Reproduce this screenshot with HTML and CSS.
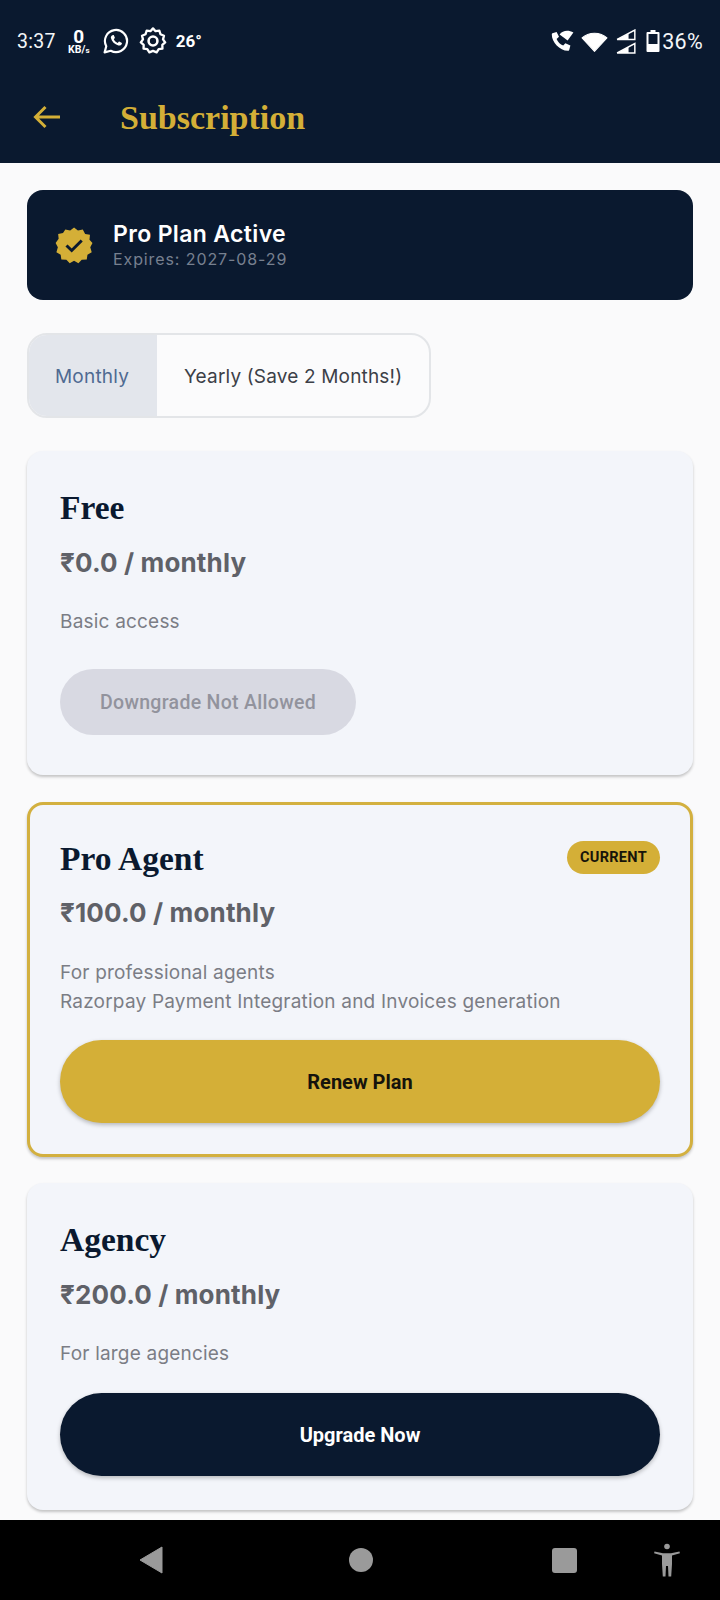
FILE: index.html
```html
<!DOCTYPE html>
<html lang="en">
<head>
<meta charset="utf-8">
<title>Subscription</title>
<link rel="stylesheet" href="styles.css">
</head>
<body>
<div class="screen">
  <header class="top">
    <div class="status">
      <div class="status-left">
        <span class="time">3:37</span>
        <span class="speed"><b>0</b><small>KB/<i>s</i></small></span>
        <svg class="si wa" viewBox="0 0 24 24"><path d="M1.500 22.500l1.500-5.700A10.200 10.200 0 1 1 7.200 21z" fill="none" stroke="#fff" stroke-width="2" stroke-linejoin="round"/><path d="M8.800 6.800c.5-.4 1.100-.4 1.300.1l.8 1.800c.1.300 0 .6-.2.800l-.7.8c.7 1.500 2 2.800 3.600 3.500l.9-1c.2-.2.5-.3.8-.2l1.800.9c.4.2.5.7.2 1.200-.5 1.100-1.800 1.700-3.100 1.400-3.500-.9-6.100-3.500-6.900-6.800-.2-1.100.2-1.800 1.500-2.500z" fill="#fff"/></svg>
        <svg class="si gear" viewBox="0 0 24 24"><path d="M12 1.800l2.200 2.400 3.200-.5 1 3.100 3 1.300-.8 3.100 1.800 2.600-2.400 2.100.1 3.300-3.200.4-1.800 2.700-3.100-1.200-3.100 1.200-1.800-2.700-3.200-.4.1-3.300-2.400-2.100 1.800-2.600-.8-3.100 3-1.300 1-3.100 3.200.5z" fill="none" stroke="#fff" stroke-width="2" stroke-linejoin="round" transform="translate(0 -.6)"/><circle cx="12" cy="12" r="3.800" fill="none" stroke="#fff" stroke-width="2.200"/></svg>
        <span class="temp">26°</span>
      </div>
      <div class="status-right">
        <svg class="call" viewBox="0 0 20 20"><path d="M2 3.500l3.500-1 2 4-2 1.800c.9 2.400 3 4.500 5.500 5.500l1.800-2 4.200 2-1 3.700c-.2.500-.6.700-1.100.7C8 17.800 1.500 11 1.500 4.500c0-.4.100-.8.500-1z" fill="#fff"/><path d="M8 4.500C10.500 1 15.500 .5 19.500 3l-4.800 6.500z" fill="#fff"/></svg>
        <svg class="wifi" viewBox="0 0 26 20"><path d="M1 6.500C7.500 .5 18.500 .5 25 6.500L13 19.500z" fill="#fff" stroke="#fff" stroke-linejoin="round"/></svg>
        <svg class="signal" viewBox="0 0 20 24"><path d="M1 10L18 1v9z" fill="none" stroke="#fff" stroke-width="1.400"/><path d="M1 10l11-5.800V10z" fill="#fff"/><path d="M1 23l17-9v9z" fill="none" stroke="#fff" stroke-width="1.400"/><path d="M1 23l11-5.800V23z" fill="#fff"/></svg>
        <svg class="batt" viewBox="0 0 14 22"><path d="M4.500 0h5v2h3a1 1 0 0 1 1 1v18a1 1 0 0 1-1 1h-11a1 1 0 0 1-1-1V3a1 1 0 0 1 1-1h3z" fill="#fff"/><rect x="2.500" y="4" width="9" height="10" fill="#0a192f"/></svg>
        <span class="pct">36%</span>
      </div>
    </div>
    <div class="appbar">
      <svg class="back" viewBox="0 0 28 24"><path d="M27 12H2.500M12.500 2L2.500 12l10 10" fill="none" stroke="#d4af37" stroke-width="3"/></svg>
      <h1 class="title">Subscription</h1>
    </div>
  </header>

  <main class="content">
    <section class="banner">
      <svg class="badge-icon" viewBox="0 0 36 36"><path d="M18 0l4 3.300 5-1.200 2.400 4.600 5 1-.5 5.100L37 16l-2.300 4.500 1.500 5-4.400 2.600-.7 5.100-5.200.1L22.500 37 18 34.500 13.500 37l-3.400-3.700-5.200-.1-.7-5.100-4.400-2.600 1.500-5L-1 16l3.100-4.200-.5-5.100 5-1L9 2.100l5 1.200z" fill="#d4af37" transform="translate(.6 .4) scale(.97)"/><path d="M10.500 18.500l5.200 5 10-10" fill="none" stroke="#0a192f" stroke-width="3"/></svg>
      <div class="banner-text">
        <div class="banner-title">Pro Plan Active</div>
        <div class="banner-sub">Expires: 2027-08-29</div>
      </div>
    </section>

    <div class="toggle">
      <div class="seg seg-on">Monthly</div>
      <div class="seg">Yearly (Save 2 Months!)</div>
    </div>

    <section class="card card-free">
      <h2 class="plan">Free</h2>
      <div class="price">₹0.0 / monthly</div>
      <p class="desc">Basic access</p>
      <div class="btn btn-off">Downgrade Not Allowed</div>
    </section>

    <section class="card card-current">
      <span class="tag">CURRENT</span>
      <h2 class="plan">Pro Agent</h2>
      <div class="price">₹100.0 / monthly</div>
      <p class="desc">For professional agents<br>Razorpay Payment Integration and Invoices generation</p>
      <div class="btn btn-gold">Renew Plan</div>
    </section>

    <section class="card card-agency">
      <h2 class="plan">Agency</h2>
      <div class="price">₹200.0 / monthly</div>
      <p class="desc">For large agencies</p>
      <div class="btn btn-navy">Upgrade Now</div>
    </section>
  </main>

  <nav class="navbar">
    <svg class="nav-back" viewBox="0 0 24 28"><path d="M23 1v26L1 14z" fill="#9a9a9a" stroke="#9a9a9a" stroke-width="1" stroke-linejoin="round"/></svg>
    <span class="nav-home"></span>
    <span class="nav-recent"></span>
    <svg class="nav-a11y" viewBox="0 0 26 34"><circle cx="13" cy="3.500" r="2.800" fill="#9a9a9a"/><path d="M.500 8.500L9 10.200h8l8.500-1.700.4 1.800L18 12.500V21l-.8 12.500h-2.700L14 23h-2l-.5 10.500H8.800L8 21v-8.500L.1 10.300z" fill="#9a9a9a"/></svg>
  </nav>
</div>
</body>
</html>
```

FILE: styles.css
```css
* { box-sizing: border-box; }
html, body { margin: 0; padding: 0; }
body { font-family: Inter, "Noto Sans", sans-serif; background: #fafafb; }
.screen { width: 720px; height: 1600px; display: flex; flex-direction: column; overflow: hidden; background: #fafafb; }

.top { height: 163px; background: #0a192f; flex: none; }
.status { height: 82px; padding: 0 17px 0 17px; display: flex; justify-content: space-between; align-items: center; color: #fff; }
.status-left, .status-right { display: flex; align-items: center; }
.time { font: 400 19.500px Roboto, sans-serif; letter-spacing: .3px; color: #f4f6f8; }
.speed { display: flex; flex-direction: column; align-items: center; margin-left: 10px; width: 26px; line-height: 1; }
.speed b { font: 700 19px/17px Roboto, sans-serif; }
.speed small { font: 700 10.500px/9px Roboto, sans-serif; white-space: nowrap; }
.speed i { font-style: normal; font-size: 8px; }
.si { width: 26px; height: 26px; display: block; }
.wa { margin-left: 11px; }
.gear { margin-left: 10px; width: 28px; height: 28px; }
.temp { font: 700 17px "Roboto", sans-serif; margin-left: 9px; }
.call { width: 24px; height: 24px; display: block; }
.wifi { width: 27px; height: 21px; margin-left: 7px; display: block; }
.signal { width: 21px; height: 25px; margin-left: 8px; display: block; }
.batt { width: 14px; height: 22px; margin-left: 9px; display: block; }
.pct { font: 400 21.500px Roboto, sans-serif; color: #f4f6f8; margin-left: 2px; letter-spacing: .3px; }

.appbar { height: 81px; display: flex; align-items: center; padding: 0 0 12px 33px; }
.back { width: 28px; height: 24px; display: block; }
.title { margin: 3px 0 0 59px; font: 700 34px/1 "Liberation Serif", serif; color: #d4af37; }

.content { flex: 1; padding: 27px 27px 0; display: flex; flex-direction: column; min-height: 0; }
.banner { height: 110px; flex: none; border-radius: 16px; background: #0a192f; display: flex; align-items: center; padding: 0 0 0 29px; }
.badge-icon { width: 36px; height: 36px; display: block; overflow: visible; }
.banner-text { margin-left: 21px; }
.banner-title { font: 600 23px/26px Inter, sans-serif; letter-spacing: .35px; color: #fff; }
.banner-sub { font: 400 16px/21px Inter, sans-serif; letter-spacing: .9px; color: #77808f; margin-top: 2px; }

.toggle { align-self: flex-start; margin-top: 33px; height: 85px; display: flex; border: 2px solid #e3e5e8; border-radius: 20px; overflow: hidden; flex: none; background: #fbfbfc; }
.seg { display: flex; align-items: center; padding: 1px 27px 0 27px; font: 400 19px Inter, sans-serif; letter-spacing: .17px; color: #3c4047; }
.seg-on { background: #e3e6ec; color: #4f6a92; padding: 1px 28px 0 26px; letter-spacing: .2px; }

.card { position: relative; flex: none; border-radius: 16px; background: #f3f5fa; box-shadow: 0 2px 3px rgba(0,0,0,.22); padding: 0 33px; margin-bottom: 27px; }
.card-free { margin-top: 33px; height: 324px; padding-top: 36px; }
.card-current { height: 355px; border: 3px solid #d3b03f; padding: 33px 30px 0; margin-bottom: 26px; }
.card-current .price { margin-top: 18px; }
.card-current .desc { margin-top: 31px; }
.card-current .btn-gold { margin-top: 24px; }
.card-agency { height: 327px; padding-top: 36px; }
.plan { margin: 0; font: 700 33.500px/42px "Liberation Serif", serif; color: #0a192f; }
.price { margin-top: 19px; font: 700 26px/30px Inter, sans-serif; letter-spacing: .15px; color: #5f6168; }
.desc { margin: 30px 0 0; font: 400 19px/28.500px Inter, sans-serif; letter-spacing: .2px; color: #7b7d85; }
.btn { display: flex; align-items: center; justify-content: center; border-radius: 42px; font: 700 20px Roboto, sans-serif; }
.btn-off { width: 296px; height: 66px; margin-top: 32px; padding-top: 2px; background: #d8d9e2; color: #92939d; font-weight: 500; font-size: 19.500px; letter-spacing: .3px; }
.btn-gold { height: 83px; margin-top: 25px; background: #d4af37; color: #15130c; box-shadow: 0 2px 4px rgba(0,0,0,.25); }
.btn-navy { height: 83px; margin-top: 24px; padding-top: 1px; background: #0a192f; color: #fff; box-shadow: 0 2px 4px rgba(0,0,0,.25); }
.tag { position: absolute; top: 36px; right: 30px; height: 33px; width: 93px; border-radius: 17px; background: #d4af37; color: #17140a; font: 700 14.500px/33px Roboto, sans-serif; letter-spacing: .3px; text-align: center; }

.navbar { height: 80px; flex: none; background: #000; position: relative; display: flex; align-items: center; }
.nav-back { width: 24px; height: 28px; margin-left: 139px; display: block; }
.nav-home { width: 24px; height: 24px; border-radius: 50%; background: #9a9a9a; margin-left: 186px; }
.nav-recent { width: 25px; height: 25px; border-radius: 3px; background: #9a9a9a; margin-left: 179px; }
.nav-a11y { width: 26px; height: 34px; margin-left: 77px; display: block; }
```
